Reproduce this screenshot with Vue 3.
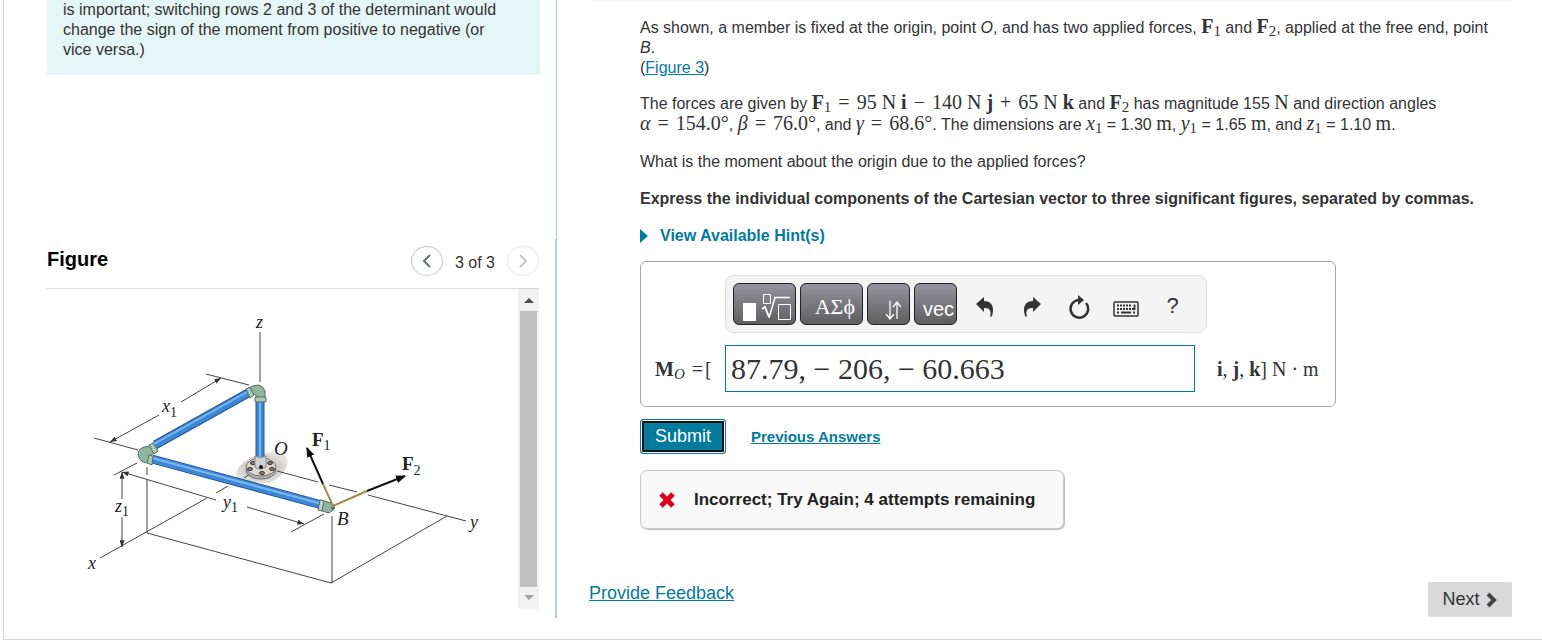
<script setup>
import { ref } from 'vue'

const figure = ref(3)
const total = 3
const answer = ref('87.79, − 206, − 60.663')

// bolt holes on the base flange
const bolts = [
    { x: 253, y: 463 },
    { x: 250, y: 469 },
    { x: 262, y: 473 },
    { x: 272, y: 469 },
    { x: 270, y: 463 },
]
</script>

<template>
<div class="page">
    <aside class="left">
        <div class="info">
            is important; switching rows 2 and 3 of the determinant would change the sign of the moment from positive to negative (or vice versa.)
        </div>
        <div class="figure-head">
            <h2>Figure</h2>
            <div class="pager">
                <button type="button" class="round" aria-label="Previous figure">
                    <svg width="10" height="14" viewBox="0 0 10 14"><path d="M8 1 2 7l6 6" /></svg>
                </button>
                <span>{{ figure }} of {{ total }}</span>
                <button type="button" class="round" aria-label="Next figure" disabled>
                    <svg width="10" height="14" viewBox="0 0 10 14"><path d="M2 1l6 6-6 6" /></svg>
                </button>
            </div>
        </div>
        <div class="figure-body">
            <svg class="drawing" viewBox="47 289 471 320" width="471" height="320">
                <defs>
                    <marker id="tip" viewBox="0 0 8 6" refX="8" refY="3" markerWidth="7" markerHeight="5" markerUnits="userSpaceOnUse" orient="auto-start-reverse"><path d="M0 0 8 3 0 6z" fill="#333" /></marker>
                    <marker id="force" viewBox="0 0 10 8" refX="9" refY="4" markerWidth="10" markerHeight="8" markerUnits="userSpaceOnUse" orient="auto"><path d="M0 0 10 4 0 8z" fill="#111" /></marker>
                    <radialGradient id="shade"><stop offset="0.7" stop-color="#d2cfce" /><stop offset="1" stop-color="#e4e2e0" /></radialGradient>
                </defs>
                <path d="M236 475c0-8 8-14 18-19 12-5 26-5 31 0 5 4 2 13-3 18-6 6-13 11-20 9-8-2-26 0-26-8z" fill="url(#shade)" />
                <!-- axes and ground box -->
                <g class="thin">
                    <path d="M260 332v50" />
                    <path d="M250 474l-6 4M228 486l-12 7M207 498l-107 60" />
                    <path d="M277 471l41 11M329 485l28 7M368 495l98 26" />
                    <path d="M147 467v8M147 479v54L331 583l116-67M332 516v67" />
                </g>
                <!-- dimensions -->
                <g class="thin">
                    <path d="M206 374l43 11M94 438l44 12M114 475l23-12M291 532l33-18" />
                    <path d="M181 402l40-24" marker-end="url(#tip)" />
                    <path d="M159 415l-49 27" marker-end="url(#tip)" />
                    <path d="M122 499v-27" marker-end="url(#tip)" />
                    <path d="M122 517v30" marker-end="url(#tip)" />
                    <path d="M216 500l-94-28" marker-end="url(#tip)" />
                    <path d="M247 507l57 17" marker-end="url(#tip)" />
                </g>
                <!-- base flange -->
                <ellipse cx="261" cy="470" rx="15" ry="9" fill="#b5b2b0" stroke="#666" />
                <ellipse cx="261" cy="467" rx="15" ry="9" fill="#ddd6ce" stroke="#77706c" />
                <ellipse v-for="b in bolts" :key="b.x" :cx="b.x" :cy="b.y" rx="2.500" ry="1.500" fill="#8b837e" stroke="#333" />
                <!-- pipes -->
                <g class="pipe edge"><path d="M260 401v57" /><path d="M155 445l95-53" /><path d="M152 459l170 46" /></g>
                <g class="pipe body"><path d="M260 401v57" /><path d="M155 445l95-53" /><path d="M152 459l170 46" /></g>
                <g class="pipe shine"><path d="M260 401v57" /><path d="M154 444l95-53" /><path d="M152 458l170 46" /></g>
                <path d="M255 456v11q5 4 11 0v-11q-5 3-11 0z" fill="#cfd1d3" stroke="#888" />
                <circle cx="261" cy="467" r="2" fill="#111" />
                <!-- fittings -->
                <g fill="#91b3a0" stroke="#526f60">
                    <path d="M247 389q14-9 18 2v8h-9v-4q-1-2-6 1z" />
                    <rect x="255" y="397" width="11" height="5" rx="1" fill="#a9c7b5" />
                    <path d="M246 389l4-2 4 8-4 3z" fill="#a9c7b5" />
                    <path d="M150 446q-13 1-12 9 2 8 10 8l4-9 5-2-4-8z" />
                    <path d="M149 455l4 1-1 9-5-2z" fill="#a9c7b5" />
                    <path d="M149 445l4-2 5 8-4 3z" fill="#a9c7b5" />
                    <path d="M321 500l10 3q5 3 2 7l-4 3-10-3z" />
                    <path d="M320 500l4 1-2 10-4-1z" fill="#b9d5c3" />
                </g>
                <circle cx="333" cy="508" r="2" fill="#5c7668" />
                <!-- forces -->
                <path d="M323 484l10 22 34-15" fill="none" stroke="#a58a4b" stroke-width="2" />
                <g fill="none" stroke="#111" stroke-width="2">
                    <path d="M323 484l-16-36" marker-end="url(#force)" />
                    <path d="M367 491l38-15" marker-end="url(#force)" />
                </g>
                <g class="labels">
                    <text x="256" y="328">z</text>
                    <text x="162" y="412">x<tspan class="low" dy="5">1</tspan></text>
                    <text x="115" y="512">z<tspan class="low" dy="4">1</tspan></text>
                    <text x="223" y="508">y<tspan class="low" dy="4">1</tspan></text>
                    <text x="88" y="569">x</text>
                    <text x="470" y="528">y</text>
                    <text x="274" y="455" class="big">O</text>
                    <text x="337" y="525" class="big">B</text>
                    <text x="312" y="446" class="bold">F<tspan class="low" dy="4">1</tspan></text>
                    <text x="402" y="470" class="bold">F<tspan class="low" dy="5">2</tspan></text>
                </g>
            </svg>
            <div class="scroll">
                <button type="button" aria-label="Scroll up"><svg width="10" height="6" viewBox="0 0 10 6"><path d="M0 6 5 1l5 5z" fill="#505050" /></svg></button>
                <div class="thumb"></div>
                <button type="button" aria-label="Scroll down"><svg width="10" height="6" viewBox="0 0 10 6"><path d="M0 0 5 5l5-5z" fill="#a3a3a3" /></svg></button>
            </div>
        </div>
    </aside>
    <div class="divider"></div>

    <main class="right">
        <div class="problem">
            <p class="intro">As shown, a member is fixed at the origin, point <em>O</em>, and has two applied forces, <span class="m"><b>F</b><sub>1</sub></span> and <span class="m"><b>F</b><sub>2</sub></span>, applied at the free end, point <em>B</em>.<br>(<a href="#">Figure 3</a>)</p>
            <p class="formula">The forces are given by <span class="m"><b>F</b><sub>1</sub> <span class="op">=</span> 95 N <b>i</b> <span class="op">−</span> 140 N <b>j</b> <span class="op">+</span> 65 N <b>k</b></span> and <span class="m"><b>F</b><sub>2</sub></span> has magnitude 155 <span class="m">N</span> and direction angles<br><span class="m"><i>α</i> <span class="op">=</span> 154.0°</span>, <span class="m"><i>β</i> <span class="op">=</span> 76.0°</span>, and <span class="m"><i>γ</i> <span class="op">=</span> 68.6°</span>. The dimensions are <span class="m"><i>x</i><sub>1</sub></span> = 1.30 <span class="m">m</span>, <span class="m"><i>y</i><sub>1</sub></span> = 1.65 <span class="m">m</span>, and <span class="m"><i>z</i><sub>1</sub></span> = 1.10 <span class="m">m</span>.</p>
            <p>What is the moment about the origin due to the applied forces?</p>
            <p><strong>Express the individual components of the Cartesian vector to three significant figures, separated by commas.</strong></p>
            <button type="button" class="hints"><svg width="8" height="14" viewBox="0 0 8 14"><path d="M0 0l8 7-8 7z" fill="#047a9c" /></svg>View Available Hint(s)</button>

            <form class="answer" @submit.prevent>
                <div class="toolbar">
                    <button type="button" class="dark wide" aria-label="Templates">
                        <svg width="50" height="30" viewBox="0 0 50 30">
                            <path d="M1 11h13v18H1z" fill="#fff" />
                            <g fill="none" stroke="#fff">
                                <path d="M21.500 2.500h7v9h-7zM36.500 12.500h12v15h-12z" />
                                <path d="M20 17l3-2 4 10" stroke-width="2" />
                                <path d="M27 26l6-20.500h15" stroke-width="1.500" />
                            </g>
                        </svg>
                    </button>
                    <button type="button" class="dark wide greek">ΑΣϕ</button>
                    <button type="button" class="dark arrows" aria-label="Arrows">
                        <svg width="16" height="19" viewBox="0 0 16 19"><path d="M5 0v18M1 13l4 5 4-5M12 18V1M8 6l4-5 4 5" fill="none" stroke="#fff" stroke-width="1.300" /></svg>
                    </button>
                    <button type="button" class="dark vec">vec</button>
                    <button type="button" class="icon" aria-label="Undo"><svg width="18" height="20" viewBox="0 0 18 20"><path d="M0 7 8 0v4c7 0 11 5 8 15l-2 1c2-7-1-9-6-9v4z" fill="#333" /></svg></button>
                    <button type="button" class="icon" aria-label="Redo"><svg width="18" height="20" viewBox="0 0 18 20"><path d="M18 7 10 0v4C3 4-1 9 2 19l2 1c-2-7 1-9 6-9v4z" fill="#333" /></svg></button>
                    <button type="button" class="icon" aria-label="Reset"><svg width="22" height="24" viewBox="0 0 22 24"><path d="M11 5a8.800 8.800 0 1 0 7 3" fill="none" stroke="#333" stroke-width="2.500" /><path d="M10 0l6 5-6 5z" fill="#333" /></svg></button>
                    <button type="button" class="icon keyboard" aria-label="Keyboard">
                        <svg width="26" height="16" viewBox="0 0 26 16">
                            <rect x="1" y="1" width="24" height="14" rx="1" fill="none" stroke="#333" stroke-width="1.500" />
                            <path d="M4 4.500h15M4 8h14M4 11.500h2M20 11.500h3" fill="none" stroke="#333" stroke-width="1.800" stroke-dasharray="2 1" />
                            <path d="M8 11.500h10M21.500 3.500V8H19" fill="none" stroke="#333" stroke-width="1.800" />
                        </svg>
                    </button>
                    <button type="button" class="icon help" aria-label="Help">?</button>
                </div>
                <label for="moment" class="m"><b>M</b><sub><i>O</i></sub> <span class="op">=</span>[</label>
                <input id="moment" v-model="answer" type="text">
                <span class="m units"><b>i</b>, <b>j</b>, <b>k</b>] N · m</span>
            </form>

            <div class="actions">
                <button type="submit" class="submit">Submit</button>
                <a href="#">Previous Answers</a>
            </div>
            <div class="feedback" role="alert">
                <svg width="18" height="18" viewBox="0 0 18 18"><path d="M3 3l12 12M15 3 3 15" stroke="#e00020" stroke-width="5" /></svg>
                Incorrect; Try Again; 4 attempts remaining
            </div>
        </div>
        <div class="bottom">
            <a href="#">Provide Feedback</a>
            <button type="button" class="next">Next <svg width="12" height="16" viewBox="0 0 12 16"><path d="M2 2l6 6-6 6" fill="none" stroke="#444" stroke-width="4" /></svg></button>
        </div>
    </main>
</div>
</template>

<style>
body {
    background: #fff;
}
</style>

<style scoped>
* {
    box-sizing: border-box;
}

.page {
    display: flex;
    margin-left: 3px;
    padding: 0 30px 21px 43px;
    border-left: 1px solid #d5d5d5;
    border-bottom: 1px solid #d5d5d5;
    font-family: "Liberation Sans", Arial, sans-serif;
    font-size: 16px;
    line-height: 20px;
    color: #333;
}

button {
    font-family: inherit;
    padding: 0;
    border: 0;
    background: none;
    cursor: pointer;
}

a {
    color: #047a9c;
}

.left {
    flex: 0 0 493px;
    display: flex;
    flex-direction: column;
}

.info {
    padding: 0 32px 15px 16px;
    background: #e6f6f6;
}

.figure-head {
    display: flex;
    justify-content: space-between;
    align-items: center;
    height: 55px;
    margin: 159px 1px 0 0;
    border-bottom: 1px solid #d9d9d9;
}

h2 {
    margin: 0 0 4px;
    font-size: 20px;
    color: #000;
}

.pager {
    display: flex;
    align-items: center;
    gap: 12px;
}

.pager span {
    padding-top: 4px;
}

.round {
    display: flex;
    align-items: center;
    justify-content: center;
    width: 32px;
    height: 30px;
    border: 1px solid #c7c7c7;
    border-radius: 50%;
}

.round path {
    fill: none;
    stroke: #6a7070;
    stroke-width: 2;
}

.round:disabled {
    border-color: #e9e9e9;
}

.round:disabled path {
    stroke: #c7c7c7;
}

.figure-body {
    display: flex;
    height: 320px;
    margin-right: 1px;
}

.drawing {
    flex: 1;
    min-width: 0;
}

.thin {
    fill: none;
    stroke: #444;
    stroke-width: 1;
}

.pipe {
    fill: none;
}

.edge {
    stroke: #27588f;
    stroke-width: 9;
}

.body {
    stroke: #3d87d8;
    stroke-width: 7;
}

.shine {
    stroke: #7db7f0;
    stroke-width: 2;
}

.labels {
    font-family: "Liberation Serif", "Times New Roman", serif;
    font-size: 18px;
    font-style: italic;
    fill: #222;
}

.labels .big {
    font-size: 19px;
}

.labels .bold {
    font-size: 19px;
    font-weight: bold;
    font-style: normal;
}

.labels .low {
    font-size: 14px;
    font-weight: normal;
    font-style: normal;
}

.scroll {
    display: flex;
    flex-direction: column;
    width: 21px;
    background: #f1f1f1;
}

.scroll button {
    display: flex;
    align-items: center;
    justify-content: center;
    height: 22px;
}

.thumb {
    flex: 1;
    margin: 0 2px;
    background: #c1c1c1;
}

.divider {
    display: flex;
    width: 2px;
    margin: 0 32px 0 15px;
    border-right: 1px solid #bccbdc;
}

.divider::before {
    content: "";
    width: 1px;
    margin-top: 239px;
    background: #bccbdc;
}

.right {
    flex: 1;
    min-width: 0;
    padding-bottom: 1px;
    border-top: 1px solid #f5f5f5;
}

.problem {
    padding: 16px 0 0 51px;
}

p {
    margin: 0 0 17px;
}

.intro {
    margin-bottom: 15px;
    padding-right: 5px;
}

.formula {
    line-height: 21px;
}

.m {
    font-family: "Liberation Serif", "Times New Roman", serif;
    font-size: 20px;
    line-height: 18px;
}

.op {
    margin: 0 2px;
}

sub {
    font-size: 15px;
    line-height: 1px;
    vertical-align: -3px;
}

.hints {
    display: flex;
    align-items: center;
    gap: 12px;
    font-size: 16px;
    font-weight: bold;
    line-height: 20px;
    color: #047a9c;
}

.answer {
    display: grid;
    grid-template-columns: 72px 470px 1fr;
    align-items: center;
    row-gap: 12px;
    max-width: 696px;
    margin-top: 15px;
    padding: 13px 12px 14px;
    border: 1px solid #a9a9a9;
    border-radius: 6px;
}

.toolbar {
    grid-column: 2 / 4;
    justify-self: start;
    display: flex;
    align-items: center;
    width: 482px;
    height: 58px;
    padding: 0 7px;
    border: 1px solid #dedede;
    border-radius: 8px;
    background: #f4f4f4;
}

.dark {
    display: flex;
    align-items: flex-end;
    justify-content: flex-end;
    width: 43px;
    height: 42px;
    margin-right: 4px;
    padding: 0 3px 2px 0;
    border: 1px solid #222;
    border-radius: 6px;
    background: linear-gradient(#96949e, #5e5e60);
    color: #fff;
}

.wide {
    width: 63px;
}

.greek {
    padding: 0 7px 4px 0;
    font-family: "Liberation Serif", serif;
    font-size: 22px;
}

.arrows {
    padding: 0 8px 4px 0;
}

.vec {
    padding: 0 2px 3px 0;
    font-size: 20px;
}

.icon {
    display: flex;
    align-items: center;
    justify-content: center;
    width: 47px;
    height: 42px;
    color: #333;
}

.icon svg {
    margin-top: 5px;
}

.keyboard svg {
    margin-top: 10px;
}

.help {
    padding-top: 3px;
    font-size: 22px;
}

.answer label {
    padding-left: 2px;
}

.answer input {
    width: 100%;
    height: 47px;
    padding: 0 5px;
    border: 1px solid #047a9c;
    outline: 0;
    font-family: "Liberation Serif", "Times New Roman", serif;
    font-size: 30px;
    color: #333;
}

.units {
    padding-left: 22px;
}

.actions {
    display: flex;
    align-items: center;
    gap: 25px;
    margin-top: 12px;
    font-size: 15px;
    font-weight: bold;
}

.submit {
    width: 86px;
    height: 35px;
    border: 1px solid #047a9c;
    border-radius: 3px;
    background: #047a9c;
    box-shadow: inset 0 0 0 1px #fff, inset 0 0 0 3px #111;
    font-size: 18px;
    color: #fff;
}

.feedback {
    display: flex;
    align-items: center;
    gap: 18px;
    width: fit-content;
    height: 59px;
    margin-top: 16px;
    padding: 0 28px 0 17px;
    border: 1px solid #c9c9c9;
    border-radius: 7px;
    background: #f9f9f9;
    box-shadow: 1px 1px 1px #bbb;
    font-size: 17px;
    font-weight: bold;
    color: #222;
}

.bottom {
    display: flex;
    justify-content: space-between;
    align-items: center;
    margin-top: 53px;
    font-size: 18px;
}

.bottom a {
    margin-bottom: 14px;
}

.next {
    display: flex;
    align-items: center;
    justify-content: center;
    gap: 6px;
    width: 84px;
    height: 35px;
    border-radius: 2px;
    background: #d9d9d9;
    font-size: 18px;
    color: #333;
}
</style>
